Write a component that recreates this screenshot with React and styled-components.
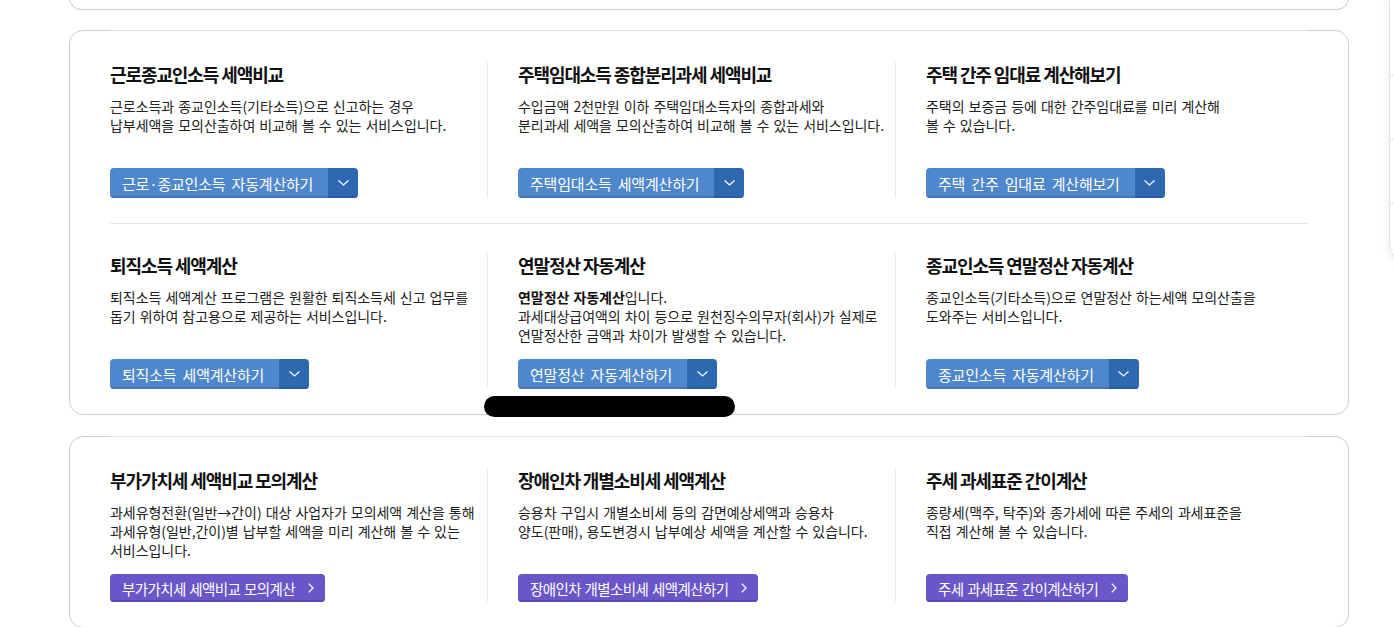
import React from 'react';
import styled, { createGlobalStyle } from 'styled-components';

const GlobalStyle = createGlobalStyle`
  html, body {
    margin: 0;
    padding: 0;
    background: #fff;
    overflow: hidden;
  }
  body {
    font-family: "Noto Sans CJK KR", "Noto Sans", sans-serif;
    color: #222;
  }
`;

const Page = styled.div`
  width: 1280px;
  height: 627px;
  padding-left: 69px;
  overflow: hidden;
`;

const Card = styled.section`
  position: relative;
  box-sizing: border-box;
  border: 1px solid #c3d0d9;
  border-radius: 14px;
  background: #fff;
  padding: 31px 40px 25px;
  margin-top: ${(p) => p.$gap || 0}px;

  &::before {
    content: '';
    position: absolute;
    top: -1px;
    left: 40px;
    right: 40px;
    height: 1px;
    background: #dbe3e9;
  }
`;

const PrevCard = styled.div`
  box-sizing: border-box;
  height: 60px;
  margin-top: -50px;
  border: 1px solid #c3d0d9;
  border-radius: 12px;
`;

const Row = styled.div`
  display: grid;
  grid-template-columns: 377px 408px 1fr;
`;

const RowDivider = styled.hr`
  border: 0;
  height: 1px;
  background: #e7e9eb;
  margin: 25px 0 29px;
`;

const Column = styled.div`
  display: flex;
  flex-direction: column;
  align-items: flex-start;
  padding-left: ${(p) => (p.$first ? 0 : 30)}px;
  border-left: ${(p) => (p.$first ? 'none' : '1px solid #e8eaec')};
`;

const Title = styled.h3`
  margin: 0;
  font-size: 18px;
  line-height: 24px;
  font-weight: 700;
  letter-spacing: -1.1px;
  color: #111;
  white-space: nowrap;
`;

const Desc = styled.p`
  margin: 11px 0 14px;
  min-height: 57px;
  font-size: 14px;
  line-height: 19px;
  letter-spacing: -0.05px;
  word-spacing: 1px;
  color: #222;
  white-space: nowrap;

  strong {
    font-weight: 700;
    color: #111;
  }
`;

const SplitButton = styled.div`
  display: inline-flex;
  height: 30px;
  margin-top: auto;
  border-radius: 4px;
  overflow: hidden;
  cursor: pointer;
`;

const SplitMain = styled.span`
  display: flex;
  align-items: center;
  padding: 0 15px 0 12px;
  background: #4f87cc;
  color: #fff;
  font-size: 15px;
  letter-spacing: -0.2px;
  word-spacing: 3px;
  white-space: nowrap;
  box-shadow: inset 0 -2px 0 #4277bd;
`;

const SplitToggle = styled.span`
  display: flex;
  align-items: center;
  justify-content: center;
  width: 30px;
  background: #2e68b0;
  box-shadow: inset 0 -2px 0 #285ea2;
`;

const LinkButton = styled.a`
  display: inline-flex;
  align-items: center;
  gap: 13px;
  height: 28px;
  margin-top: auto;
  padding: 0 11px 0 12px;
  border-radius: 4px;
  background: #6a56c9;
  box-shadow: inset 0 -2px 0 #5d49b9;
  color: #fff;
  font-size: 14.5px;
  letter-spacing: -0.6px;
  word-spacing: 1px;
  white-space: nowrap;
  text-decoration: none;
  cursor: pointer;
`;

const Redaction = styled.div`
  position: absolute;
  left: 414px;
  bottom: -3px;
  width: 251px;
  height: 21px;
  border-radius: 11px;
  background: #000;
`;

const QuickMenu = styled.aside`
  position: fixed;
  left: 1389px;
  top: -1px;
  width: 90px;
  height: 259px;
  box-sizing: border-box;
  padding-top: 12px;
  border: 1px solid #e3e3e3;
  border-radius: 0 0 12px 12px;
  background: #fff;
  box-shadow: 0 3px 10px rgba(0, 0, 0, 0.08);
  overflow: hidden;
`;

const QuickItem = styled.div`
  height: 63px;
  border-bottom: 1px solid #e6e6e6;
  &:last-child {
    border-bottom: none;
  }
`;

const ChevronDown = () => (
  <svg width="11" height="6" viewBox="0 0 11 6" fill="none">
    <path d="M0.5 0.5L5.5 5L10.5 0.5" stroke="#fff" strokeWidth="1.2" />
  </svg>
);

const ChevronRight = () => (
  <svg width="6" height="10" viewBox="0 0 6 10" fill="none">
    <path d="M0.7 0.6L5 5L0.7 9.4" stroke="#fff" strokeWidth="1.3" />
  </svg>
);

const calcRows = [
  [
    {
      title: '근로종교인소득 세액비교',
      desc: ['근로소득과 종교인소득(기타소득)으로 신고하는 경우', '납부세액을 모의산출하여 비교해 볼 수 있는 서비스입니다.'],
      button: '근로·종교인소득 자동계산하기',
    },
    {
      title: '주택임대소득 종합분리과세 세액비교',
      desc: ['수입금액 2천만원 이하 주택임대소득자의 종합과세와', '분리과세 세액을 모의산출하여 비교해 볼 수 있는 서비스입니다.'],
      button: '주택임대소득 세액계산하기',
    },
    {
      title: '주택 간주 임대료 계산해보기',
      desc: ['주택의 보증금 등에 대한 간주임대료를 미리 계산해', '볼 수 있습니다.'],
      button: '주택 간주 임대료 계산해보기',
    },
  ],
  [
    {
      title: '퇴직소득 세액계산',
      desc: ['퇴직소득 세액계산 프로그램은 원활한 퇴직소득세 신고 업무를', '돕기 위하여 참고용으로 제공하는 서비스입니다.'],
      button: '퇴직소득 세액계산하기',
    },
    {
      title: '연말정산 자동계산',
      lead: '연말정산 자동계산',
      desc: ['입니다.', '과세대상급여액의 차이 등으로 원천징수의무자(회사)가 실제로', '연말정산한 금액과 차이가 발생할 수 있습니다.'],
      button: '연말정산 자동계산하기',
    },
    {
      title: '종교인소득 연말정산 자동계산',
      desc: ['종교인소득(기타소득)으로 연말정산 하는세액 모의산출을', '도와주는 서비스입니다.'],
      button: '종교인소득 자동계산하기',
    },
  ],
];

const simpleRow = [
  {
    title: '부가가치세 세액비교 모의계산',
    desc: ['과세유형전환(일반→간이) 대상 사업자가 모의세액 계산을 통해', '과세유형(일반,간이)별 납부할 세액을 미리 계산해 볼 수 있는', '서비스입니다.'],
    button: '부가가치세 세액비교 모의계산',
  },
  {
    title: '장애인차 개별소비세 세액계산',
    desc: ['승용차 구입시 개별소비세 등의 감면예상세액과 승용차', '양도(판매), 용도변경시 납부예상 세액을 계산할 수 있습니다.'],
    button: '장애인차 개별소비세 세액계산하기',
  },
  {
    title: '주세 과세표준 간이계산',
    desc: ['종량세(맥주, 탁주)와 종가세에 따른 주세의 과세표준을', '직접 계산해 볼 수 있습니다.'],
    button: '주세 과세표준 간이계산하기',
  },
];

function DescText({ item }) {
  return (
    <Desc>
      {item.lead && <strong>{item.lead}</strong>}
      {item.desc.map((line, i) => (
        <React.Fragment key={i}>
          {i > 0 && <br />}
          {line}
        </React.Fragment>
      ))}
    </Desc>
  );
}

export default function App() {
  return (
    <>
      <GlobalStyle />
      <Page>
        <PrevCard />
        <Card $gap={20}>
          {calcRows.map((row, r) => (
            <React.Fragment key={r}>
              {r > 0 && <RowDivider />}
              <Row>
                {row.map((item, i) => (
                  <Column key={item.title} $first={i === 0}>
                    <Title>{item.title}</Title>
                    <DescText item={item} />
                    <SplitButton>
                      <SplitMain>{item.button}</SplitMain>
                      <SplitToggle>
                        <ChevronDown />
                      </SplitToggle>
                    </SplitButton>
                  </Column>
                ))}
              </Row>
            </React.Fragment>
          ))}
          <Redaction />
        </Card>
        <Card $gap={21}>
          <Row>
            {simpleRow.map((item, i) => (
              <Column key={item.title} $first={i === 0}>
                <Title>{item.title}</Title>
                <DescText item={item} />
                <LinkButton>
                  {item.button}
                  <ChevronRight />
                </LinkButton>
              </Column>
            ))}
          </Row>
        </Card>
      </Page>
      <QuickMenu>
        <QuickItem />
        <QuickItem />
        <QuickItem />
        <QuickItem />
      </QuickMenu>
    </>
  );
}
